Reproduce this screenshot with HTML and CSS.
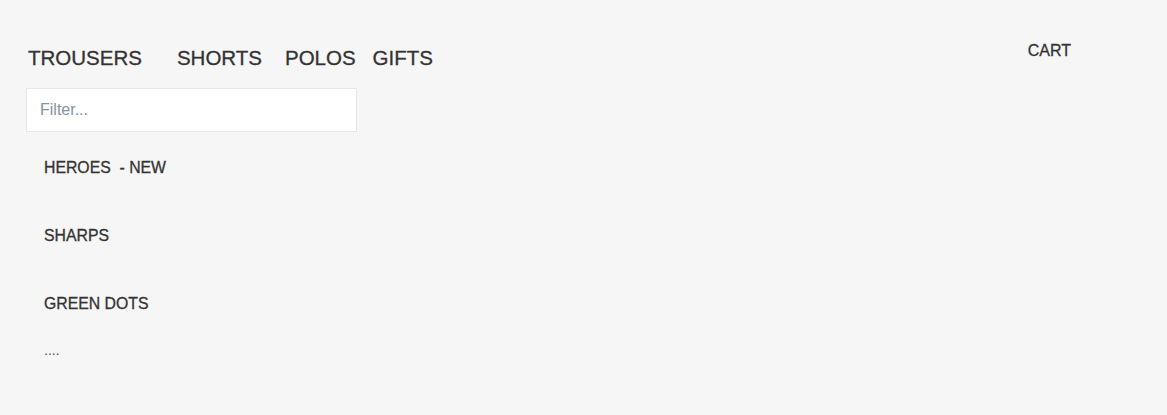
FILE: index.html
```html
<!DOCTYPE html>
<html>
<head>
<meta charset="utf-8">
<link rel="stylesheet" href="styles.css">
</head>
<body>
<div class="page">
  <div class="main">
    <nav class="nav">
      <a class="nav-item trousers">TROUSERS</a>
      <a class="nav-item shorts">SHORTS</a>
      <a class="nav-item polos">POLOS</a>
      <a class="nav-item gifts">GIFTS</a>
    </nav>
    <input class="filter" type="text" placeholder="Filter...">
    <ul class="list">
      <li class="list-item">HEROES &nbsp;- NEW</li>
      <li class="list-item">SHARPS</li>
      <li class="list-item">GREEN DOTS</li>
      <li class="list-more">....</li>
    </ul>
  </div>
  <div class="cart">CART</div>
</div>
</body>
</html>
```

FILE: styles.css
```css
html, body {
  margin: 0;
  padding: 0;
  background: #f6f6f6;
}
body {
  font-family: "Liberation Sans", Arial, sans-serif;
  color: #333;
}
.page {
  display: flex;
  justify-content: space-between;
  width: 1167px;
  height: 415px;
  box-sizing: border-box;
}
.main {
  padding: 44px 0 0 26px;
}
.nav {
  display: flex;
  padding-left: 2px;
  height: 28px;
  align-items: center;
}
.nav-item {
  font-size: 20.5px;
  color: #333;
  -webkit-text-stroke: 0.3px #333;
}
.trousers { margin-right: 35px; }
.shorts { margin-right: 23px; }
.polos { margin-right: 17px; }
.filter {
  display: block;
  margin-top: 16px;
  width: 331px;
  height: 44px;
  box-sizing: border-box;
  border: 1px solid #e6e6e6;
  background: #fff;
  padding: 0 13px;
  font-family: "Liberation Sans", Arial, sans-serif;
  font-size: 16px;
  color: #333;
  outline: none;
}
.filter::placeholder {
  color: #89929a;
}
.list {
  list-style: none;
  margin: 0;
  padding: 0 0 0 18px;
}
.list-item {
  font-size: 15.8px;
  height: 68px;
  line-height: 68px;
  -webkit-text-stroke: 0.3px #333;
}
.list-item:first-child {
  margin-top: 2px;
}
.list-more {
  font-size: 14px;
  line-height: 14px;
  margin-top: 5px;
  color: #555;
}
.cart {
  font-size: 16px;
  line-height: 20px;
  padding: 41px 96px 0 0;
  -webkit-text-stroke: 0.3px #333;
}
```
